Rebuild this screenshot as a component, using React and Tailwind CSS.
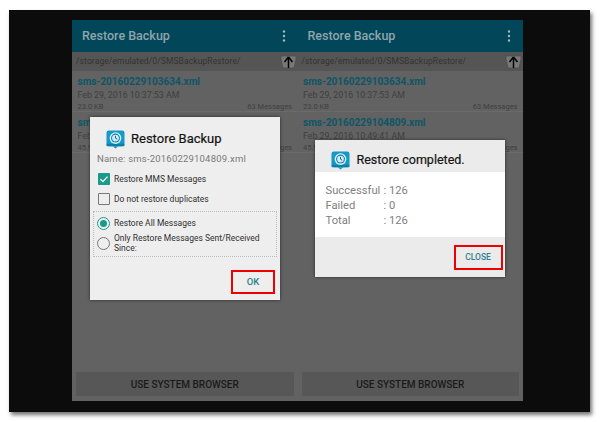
const sans = { fontFamily: '"Roboto", "Liberation Sans", sans-serif' };

function AppIcon({ size = 19 }) {
  return (
    <svg width={size} height={size} viewBox="0 0 20 20" className="shrink-0">
      <rect x="0.5" y="0.5" width="19" height="16.5" rx="2.5" fill="#159ac8" />
      <path d="M7 17h6l-3 2.6z" fill="#159ac8" />
      <rect x="0.5" y="14.5" width="19" height="2.5" rx="1" fill="#0d7ea6" />
      <circle cx="10" cy="8.5" r="6.2" fill="#d9f1f9" />
      <circle cx="10" cy="8.5" r="4.7" fill="#0f7fa8" />
      <circle cx="10" cy="8.5" r="3.6" fill="#cfeaf4" />
      <path d="M10 6.2v2.5l1.8 1" stroke="#0b6687" strokeWidth="1" fill="none" />
    </svg>
  );
}

function Row({ name, date, size, msgs }) {
  return (
    <div className="h-[41px] border-b border-[#6a6a6a] px-[5.5px] pt-[3px]">
      <div className="text-[10px] leading-[15px] font-bold text-[#0d5667] whitespace-nowrap">{name}</div>
      <div className="text-[8.8px] leading-[12px] text-[#3f3f3f] whitespace-nowrap">{date}</div>
      <div className="flex justify-between text-[7.5px] leading-[10px] mt-[1px] text-[#404040]">
        <span>{size}</span>
        <span>{msgs}</span>
      </div>
    </div>
  );
}

function Screen({ children }) {
  return (
    <div className="relative flex-1 flex flex-col bg-[#626262]">
      <div className="h-[32px] shrink-0 bg-[#02465a] flex items-center justify-between pl-[10px] pr-[12px]">
        <span className="text-[12.5px] font-medium text-[#8fa5ab]">Restore Backup</span>
        <svg width="4" height="12" viewBox="0 0 4 12"><circle cx="2" cy="1.5" r="1.2" fill="#a6b8bd" /><circle cx="2" cy="6" r="1.2" fill="#a6b8bd" /><circle cx="2" cy="10.5" r="1.2" fill="#a6b8bd" /></svg>
      </div>
      <div className="h-[19px] shrink-0 bg-[#555555] flex items-center justify-between pl-[4px] pr-[1px] text-[#333333]">
        <span className="text-[8.5px] tracking-[0.1px] whitespace-nowrap">/storage/emulated/0/SMSBackupRestore/</span>
        <svg width="17" height="14" viewBox="0 0 17 14">
          <path d="M1 1h15v3l-2 9H3L1 4z" fill="#787878" stroke="#4b4b4b" strokeWidth="0.7" />
          <path d="M8.5 2v11M8.5 2L4.5 7M8.5 2l4 5" stroke="#000" strokeWidth="1.5" fill="none" />
        </svg>
      </div>
      <Row name="sms-20160229103634.xml" date="Feb 29, 2016 10:37:53 AM" size="23.0 KB" msgs="63 Messages" />
      <Row name="sms-20160229104809.xml" date="Feb 29, 2016 10:49:41 AM" size="45.9 KB" msgs="63 Messages" />
      <div className="flex-1" />
      <div className="h-[24px] mb-[5px] mx-[4px] shrink-0 bg-[#575757] flex items-center justify-center text-[10px] font-medium text-[#1a1a1a]">
        USE SYSTEM BROWSER
      </div>
      {children}
    </div>
  );
}

export default function App() {
  return (
    <div style={sans} className="w-[600px] h-[422px] bg-white pt-[10px] pl-[9px] overflow-hidden">
      <div className="w-[581px] h-[402px] bg-[#0c0c0c] shadow-[2px_3px_4px_rgba(0,0,0,0.55)] pt-[10px] pl-[63px]">
        <div className="w-[451px] h-[381px] flex">
          <Screen>
            <div className="absolute left-[18px] top-[97px] w-[190px] h-[183px] bg-[#eeeeee] shadow-[0_0_3px_rgba(0,0,0,0.6)] flex flex-col">
              <div className="flex items-center gap-[6px] pl-[16px] pt-[10px] h-[34px] shrink-0">
                <AppIcon />
                <span className="text-[13px] text-[#141414] [-webkit-text-stroke:0.2px_#141414] whitespace-nowrap">Restore Backup</span>
              </div>
              <div className="pl-[7px] pt-[1px] text-[9.5px] leading-[14px] text-[#7a7a7a] tracking-[0.2px] whitespace-nowrap">Name: sms-20160229104809.xml</div>
              <div className="flex items-center gap-[4px] pl-[8px] h-[20px] mt-[3px]">
                <div className="w-[12px] h-[12px] rounded-[1px] bg-[#1b9a8a] flex items-center justify-center">
                  <svg width="10" height="10" viewBox="0 0 10 10"><path d="M1.5 5.2l2.4 2.4 4.6-5" stroke="#fff" strokeWidth="1.3" fill="none" /></svg>
                </div>
                <span className="text-[8.5px] text-[#303030] whitespace-nowrap">Restore MMS Messages</span>
              </div>
              <div className="flex items-center gap-[4px] pl-[8px] h-[20px]">
                <div className="w-[12px] h-[12px] rounded-[1px] border-[1.5px] border-[#777777]" />
                <span className="text-[8.5px] text-[#303030] whitespace-nowrap">Do not restore duplicates</span>
              </div>
              <div className="mx-[3px] mt-[2px] h-[46px] border border-dotted border-[#bbbbbb] pl-[3px] pt-[2px]">
                <div className="flex items-center gap-[4px] h-[18px]">
                  <div className="w-[13px] h-[13px] rounded-full border-[1.5px] border-[#1b9a8a] flex items-center justify-center">
                    <div className="w-[7px] h-[7px] rounded-full bg-[#1b9a8a]" />
                  </div>
                  <span className="text-[8.5px] text-[#303030] whitespace-nowrap">Restore All Messages</span>
                </div>
                <div className="flex items-center gap-[4px] mt-[1px]">
                  <div className="w-[13px] h-[13px] shrink-0 rounded-full border-[1.5px] border-[#777777]" />
                  <span className="text-[8.5px] leading-[10px] text-[#303030]">Only Restore Messages Sent/Received Since:</span>
                </div>
              </div>
              <div className="flex justify-end pr-[5px] mt-[13px]">
                <div className="w-[44px] h-[24px] border-[2px] border-[#ee0000] flex items-center justify-center text-[9.5px] font-medium text-[#2f7f8c]">OK</div>
              </div>
            </div>
          </Screen>
          <Screen>
            <div className="absolute left-[17px] top-[120px] w-[190px] h-[137px] bg-[#ebebeb] shadow-[0_0_3px_rgba(0,0,0,0.6)] flex flex-col">
              <div className="flex items-center gap-[7px] pl-[16px] pt-[8px] h-[32px] shrink-0">
                <AppIcon />
                <span className="text-[12.5px] text-[#141414] [-webkit-text-stroke:0.2px_#141414] whitespace-nowrap">Restore completed.</span>
              </div>
              <div className="h-[65px] shrink-0 bg-white pl-[11px] pt-[11px] text-[11.2px] leading-[15px] text-[#808080]">
                <div className="grid grid-cols-[58px_auto] w-fit">
                  <span>Successful</span><span>: 126</span>
                  <span>Failed</span><span>: 0</span>
                  <span>Total</span><span>: 126</span>
                </div>
              </div>
              <div className="flex justify-end pr-[2px] pt-[8px]">
                <div className="w-[49px] h-[25px] border-[2px] border-[#ee0000] flex items-center justify-center text-[8.5px] font-medium text-[#2f7f8c]">CLOSE</div>
              </div>
            </div>
          </Screen>
        </div>
      </div>
    </div>
  );
}
